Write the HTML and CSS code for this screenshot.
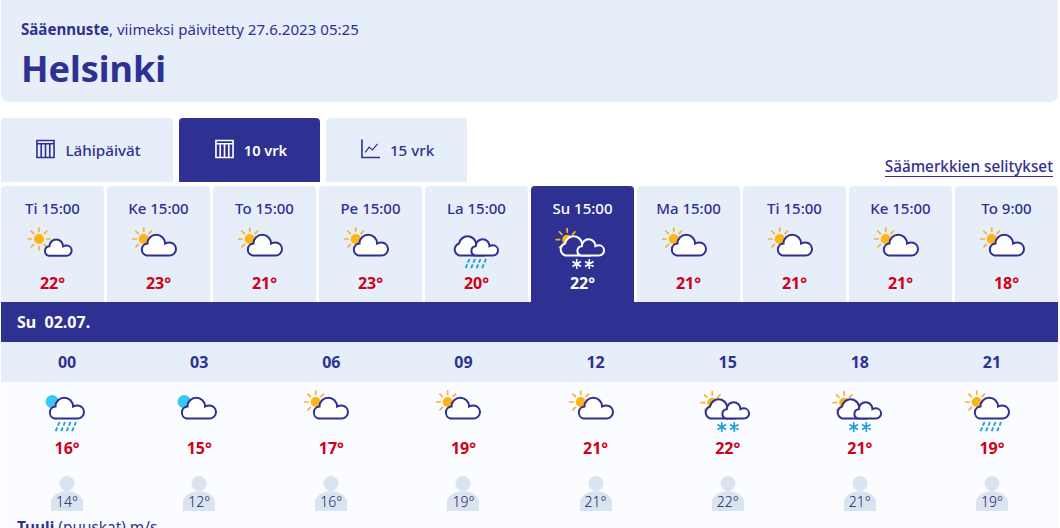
FILE: index.html
```html
<!DOCTYPE html>
<html lang="fi">
<head>
    <meta charset="UTF-8">
    <meta name="viewport" content="width=device-width, initial-scale=1.0">
    <title>Sääennuste Helsinki</title>
    <link rel="stylesheet" href="styles.css">
</head>
<body>
    <!-- Shared weather symbols -->
    <svg class="icon-defs" xmlns="http://www.w3.org/2000/svg">
        <defs>
            <path id="cloud" class="cloud" d="M18.5 30.5H41.5A6.5 6.5 0 0 0 41.5 17.5Q39 17.5 37 18.5A8.75 8.75 0 0 0 19.5 18.5A6.1 6.1 0 0 0 18.5 30.5Z"/>
            <g id="sun">
                <path class="rays" d="M0-11V-7.5M0 7.5V11M-11 0H-7.5M7.5 0H11M-7.8-7.8L-5.3-5.3M5.3 5.3L7.8 7.8M-7.8 7.8L-5.3 5.3M5.3-5.3L7.8-7.8"/>
                <circle class="sun-disc" r="5"/>
            </g>
            <g id="double-cloud">
                <path class="cloud" d="M16 30.5H38V20H30.2Q30.4 19 30.2 18.5A8.75 8.75 0 0 0 13 18.5A6.2 6.2 0 0 0 16 30.5Z"/>
                <use href="#cloud" transform="translate(14.6 6.7) scale(0.78 0.78)"/>
            </g>
            <g id="rain">
                <path class="rain" d="M23.5 34L19 44.5M29 34L24.5 44.5M34.5 34L30 44.5M40 34L35.5 44.5"/>
            </g>
            <g id="snow">
                <path class="snow" d="M24.7 34V44M20.4 36.5L29 41.5M20.4 41.5L29 36.5M37.3 34V44M33 36.5L41.6 41.5M33 41.5L41.6 36.5"/>
            </g>
        </defs>
        <symbol id="ic-fair" viewBox="0 0 60 46">
            <use href="#sun" transform="translate(17 14)"/>
            <use href="#cloud" transform="translate(12.2 6.9) scale(0.78 0.78)"/>
        </symbol>
        <symbol id="ic-partly" viewBox="0 0 60 46">
            <use href="#sun" transform="translate(15.7 14)"/>
            <use href="#cloud"/>
        </symbol>
        <symbol id="ic-partly-rain" viewBox="0 0 60 46">
            <use href="#sun" transform="translate(15.7 14)"/>
            <use href="#cloud"/>
            <use href="#rain"/>
        </symbol>
        <symbol id="ic-night" viewBox="0 0 60 46">
            <circle class="moon" cx="16.2" cy="13.7" r="6.6"/>
            <use href="#cloud"/>
        </symbol>
        <symbol id="ic-night-rain" viewBox="0 0 60 46">
            <circle class="moon" cx="16.2" cy="13.7" r="6.6"/>
            <use href="#cloud"/>
            <use href="#rain"/>
        </symbol>
        <symbol id="ic-cloudy-rain" viewBox="0 0 60 46">
            <use href="#double-cloud"/>
            <use href="#rain"/>
        </symbol>
        <symbol id="ic-cloudy-snow" viewBox="0 0 60 46">
            <use href="#sun" transform="translate(15.2 14.7)"/>
            <use href="#double-cloud"/>
            <use href="#snow"/>
        </symbol>
        <symbol id="ic-table" viewBox="0 0 20 20">
            <path class="line-icon" d="M1 1H19V19H1ZM1 4.5H19M5.5 4.5V19M10 4.5V19M14.5 4.5V19"/>
        </symbol>
        <symbol id="ic-chart" viewBox="0 0 20 20">
            <path class="line-icon" d="M1 0V19H20"/>
            <path class="line-icon thin" d="M4.5 13.5L8.5 8L12 11L17.5 4.5"/>
        </symbol>
        <symbol id="ic-person" viewBox="0 0 32 35">
            <circle class="person" cx="16" cy="7.5" r="7.5"/>
            <path class="person" d="M0 35V26C0 20 8 15 16 15C24 15 32 20 32 26V35Z"/>
        </symbol>
    </svg>

    <div class="page">
        <div class="header">
            <p class="updated"><strong>Sääennuste</strong>, viimeksi päivitetty 27.6.2023 05:25</p>
            <h1>Helsinki</h1>
        </div>

        <div class="tab-row">
            <a class="tab tab-first"><svg class="tab-icon"><use href="#ic-table"/></svg>Lähipäivät</a>
            <a class="tab active"><svg class="tab-icon"><use href="#ic-table"/></svg>10 vrk</a>
            <a class="tab"><svg class="tab-icon"><use href="#ic-chart"/></svg>15 vrk</a>
            <a class="legend-link">Säämerkkien selitykset</a>
        </div>

        <!-- Day cards -->
        <div class="day-row">
            <div class="day-card"><div class="day-name">Ti 15:00</div><svg class="wx"><use href="#ic-fair"/></svg><div class="day-temp">22°</div></div>
            <div class="day-card"><div class="day-name">Ke 15:00</div><svg class="wx"><use href="#ic-partly"/></svg><div class="day-temp">23°</div></div>
            <div class="day-card"><div class="day-name">To 15:00</div><svg class="wx"><use href="#ic-partly"/></svg><div class="day-temp">21°</div></div>
            <div class="day-card"><div class="day-name">Pe 15:00</div><svg class="wx"><use href="#ic-partly"/></svg><div class="day-temp">23°</div></div>
            <div class="day-card"><div class="day-name">La 15:00</div><svg class="wx"><use href="#ic-cloudy-rain"/></svg><div class="day-temp">20°</div></div>
            <div class="day-card selected"><div class="day-name">Su 15:00</div><svg class="wx"><use href="#ic-cloudy-snow"/></svg><div class="day-temp">22°</div></div>
            <div class="day-card"><div class="day-name">Ma 15:00</div><svg class="wx"><use href="#ic-partly"/></svg><div class="day-temp">21°</div></div>
            <div class="day-card"><div class="day-name">Ti 15:00</div><svg class="wx"><use href="#ic-partly"/></svg><div class="day-temp">21°</div></div>
            <div class="day-card"><div class="day-name">Ke 15:00</div><svg class="wx"><use href="#ic-partly"/></svg><div class="day-temp">21°</div></div>
            <div class="day-card"><div class="day-name">To 9:00</div><svg class="wx"><use href="#ic-partly"/></svg><div class="day-temp">18°</div></div>
        </div>

        <div class="date-bar">Su&nbsp; 02.07.</div>

        <!-- Hourly table -->
        <div class="hour-head">
            <div>00</div><div>03</div><div>06</div><div>09</div><div>12</div><div>15</div><div>18</div><div>21</div>
        </div>
        <div class="hour-body">
            <div class="hour-grid">
                <div class="hour"><svg class="wx"><use href="#ic-night-rain"/></svg><div class="hour-temp">16°</div><div class="feels"><svg class="feels-icon"><use href="#ic-person"/></svg><span>14°</span></div></div>
                <div class="hour"><svg class="wx"><use href="#ic-night"/></svg><div class="hour-temp">15°</div><div class="feels"><svg class="feels-icon"><use href="#ic-person"/></svg><span>12°</span></div></div>
                <div class="hour"><svg class="wx"><use href="#ic-partly"/></svg><div class="hour-temp">17°</div><div class="feels"><svg class="feels-icon"><use href="#ic-person"/></svg><span>16°</span></div></div>
                <div class="hour"><svg class="wx"><use href="#ic-partly"/></svg><div class="hour-temp">19°</div><div class="feels"><svg class="feels-icon"><use href="#ic-person"/></svg><span>19°</span></div></div>
                <div class="hour"><svg class="wx"><use href="#ic-partly"/></svg><div class="hour-temp">21°</div><div class="feels"><svg class="feels-icon"><use href="#ic-person"/></svg><span>21°</span></div></div>
                <div class="hour"><svg class="wx"><use href="#ic-cloudy-snow"/></svg><div class="hour-temp">22°</div><div class="feels"><svg class="feels-icon"><use href="#ic-person"/></svg><span>22°</span></div></div>
                <div class="hour"><svg class="wx"><use href="#ic-cloudy-snow"/></svg><div class="hour-temp">21°</div><div class="feels"><svg class="feels-icon"><use href="#ic-person"/></svg><span>21°</span></div></div>
                <div class="hour"><svg class="wx"><use href="#ic-partly-rain"/></svg><div class="hour-temp">19°</div><div class="feels"><svg class="feels-icon"><use href="#ic-person"/></svg><span>19°</span></div></div>
            </div>
            <p class="wind-title"><strong>Tuuli</strong> (puuskat) m/s</p>
        </div>
    </div>
</body>
</html>
```
FILE: styles.css
```css
html, body {
    height: 528px;
    overflow: hidden;
}
body {
    font-family: "Noto Sans", "Open Sans", Arial, sans-serif;
    margin: 0;
    padding: 0;
    background-color: #ffffff;
    color: #2e3192;
    --cloud-fill: #ffffff;
    --cloud-line: #2e3192;
    --snow-line: #1f9fdc;
}
.icon-defs {
    display: none;
}
.page {
    margin: 0 2px 0 1px;
}
.header {
    background-color: #e6eefa;
    height: 102px;
    padding: 19px 20px 0;
    box-sizing: border-box;
    border-radius: 0 0 8px 8px;
}
.updated {
    margin: 0;
    font-size: 15.1px;
    line-height: 20px;
}
h1 {
    margin: 6px 0 0;
    font-size: 36px;
    line-height: 48px;
    font-weight: 700;
}

/* Tabs */
.tab-row {
    display: flex;
    gap: 6px;
    margin-top: 16px;
    height: 64px;
}
.tab {
    width: 141px;
    display: flex;
    align-items: center;
    justify-content: center;
    gap: 10px;
    padding-left: 2px;
    box-sizing: border-box;
    background-color: #e6eefa;
    border-radius: 4px 4px 0 0;
    font-size: 15.2px;
    font-weight: 500;
}
.tab-first {
    width: 172px;
    padding-left: 3px;
}
.tab.active {
    background-color: #2e3192;
    color: #ffffff;
    font-size: 14.6px;
    font-weight: 600;
    padding-left: 3px;
    --icon-line: #ffffff;
}
.tab-icon {
    width: 19px;
    height: 20px;
    margin-top: -3px;
}
.line-icon {
    fill: none;
    stroke: var(--icon-line, #2e3192);
    stroke-width: 1.7;
}
.line-icon.thin {
    stroke-width: 1.2;
}
.legend-link {
    margin-left: auto;
    margin-right: 5px;
    align-self: flex-end;
    margin-bottom: 5px;
    font-size: 15.3px;
    line-height: 20px;
    font-weight: 500;
    border-bottom: 1px solid #2e3192;
}

/* Day cards */
.day-row {
    display: grid;
    grid-template-columns: repeat(10, 103px);
    gap: 3px;
    margin-top: 4px;
    height: 116px;
}
.day-card {
    background-color: #e6eefa;
    border-radius: 4px 4px 0 0;
    display: flex;
    flex-direction: column;
    align-items: center;
    padding-top: 12px;
    box-sizing: border-box;
    font-size: 15px;
    line-height: 20px;
}
.day-name {
    font-weight: 500;
}
.wx {
    width: 60px;
    height: 46px;
    flex: none;
    margin-left: -2px;
}
.day-card .wx {
    margin-top: 7px;
}
.day-temp {
    margin-top: 2px;
    font-size: 16px;
    font-weight: 700;
    color: #cf0018;
}
.day-card.selected {
    background-color: #2e3192;
    color: #ffffff;
    --cloud-fill: #2e3192;
    --cloud-line: #ffffff;
    --snow-line: #ffffff;
}
.selected .day-temp {
    color: #ffffff;
}

/* Weather symbol parts */
.cloud {
    fill: var(--cloud-fill);
    stroke: var(--cloud-line);
    stroke-width: 2;
    vector-effect: non-scaling-stroke;
}
.sun-disc {
    fill: #fdb414;
}
.rays {
    fill: none;
    stroke: #f6b234;
    stroke-width: 1.7;
    stroke-linecap: round;
}
.moon {
    fill: #3cc6f4;
}
.rain {
    fill: none;
    stroke: #21a0d2;
    stroke-width: 1.9;
    stroke-dasharray: 4 1.8;
}
.snow {
    fill: none;
    stroke: var(--snow-line);
    stroke-width: 1.6;
}

/* Date bar and hours */
.date-bar {
    background-color: #2e3192;
    color: #ffffff;
    height: 40px;
    line-height: 40px;
    padding-left: 16px;
    font-size: 16px;
    font-weight: 700;
}
.hour-head {
    display: grid;
    grid-template-columns: repeat(8, 1fr);
    height: 40px;
    line-height: 40px;
    background-color: #e6eefa;
    text-align: center;
    font-size: 16px;
    font-weight: 700;
}
.hour-body {
    background-color: #fafcff;
    height: 146px;
    overflow: hidden;
}
.hour-grid {
    display: grid;
    grid-template-columns: repeat(8, 1fr);
    padding-top: 6px;
}
.hour {
    display: flex;
    flex-direction: column;
    align-items: center;
}
.hour-temp {
    margin-top: 4px;
    font-size: 16px;
    line-height: 20px;
    font-weight: 700;
    color: #cf0018;
}
.feels {
    position: relative;
    width: 32px;
    height: 35px;
    margin-top: 18px;
}
.feels-icon {
    width: 32px;
    height: 35px;
    display: block;
}
.person {
    fill: #d9e4f0;
}
.feels span {
    position: absolute;
    left: 0;
    right: 0;
    bottom: 0;
    text-align: center;
    font-size: 14px;
    line-height: 19px;
    font-weight: 300;
    color: #20236f;
}
.wind-title {
    margin: 7px 0 0 16px;
    font-size: 15.4px;
    line-height: 20px;
}
```
